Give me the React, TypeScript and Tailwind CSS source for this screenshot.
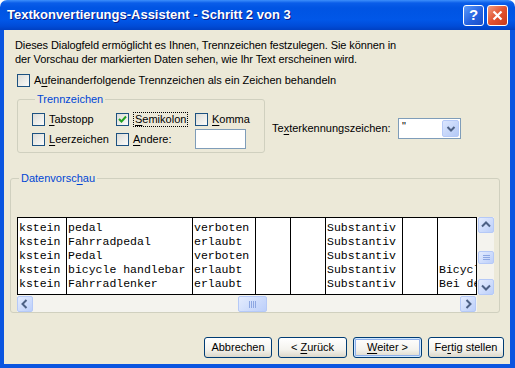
import type { ReactNode } from "react";

const rows = [
    ["kstein", "pedal", "verboten", "", "", "Substantiv", "", ""],
    ["kstein", "Fahrradpedal", "erlaubt", "", "", "Substantiv", "", ""],
    ["kstein", "Pedal", "verboten", "", "", "Substantiv", "", ""],
    ["kstein", "bicycle handlebar", "erlaubt", "", "", "Substantiv", "", "Bicycle handlebar"],
    ["kstein", "Fahrradlenker", "erlaubt", "", "", "Substantiv", "", "Bei der Sache"],
];

const colWidths = ["w-[49px]", "w-[126px]", "w-[63px]", "w-[35px]", "w-[35px]", "w-[77px]", "w-[35px]", "flex-1 border-r"];

function Key({ children }: { children: ReactNode }) {
    return <span className="underline underline-offset-[2px]">{children}</span>;
}

function Check({ checked = false }: { checked?: boolean }) {
    return (
        <span className="flex size-[13px] shrink-0 items-center justify-center border border-[#1c5180] bg-[linear-gradient(135deg,#dcdcd7,#fbfbf9)]">
            {checked && (
                <svg width="9" height="9" viewBox="0 0 9 9">
                    <path d="M1 4l2.5 2.5L8 1.5" fill="none" stroke="#21a121" strokeWidth="2" />
                </svg>
            )}
        </span>
    );
}

function Option({ checked, children, focus }: { checked?: boolean; children: ReactNode; focus?: boolean }) {
    return (
        <div className="flex items-center gap-[4px]">
            <Check checked={checked} />
            <span className={focus ? "border border-dotted border-black px-[1px] leading-[13px]" : "leading-[13px]"}>
                {children}
            </span>
        </div>
    );
}

const arrows = {
    up: "M4 9.5l4-4 4 4",
    down: "M4 6.5l4 4 4-4",
    left: "M9.5 4l-4 4 4 4",
    right: "M6.5 4l4 4-4 4",
};

function ScrollBtn({ dir }: { dir: keyof typeof arrows }) {
    return (
        <div className="flex size-[16px] shrink-0 items-center justify-center rounded-[2px] border border-[#b5c9f7] bg-[linear-gradient(135deg,#e4ecfe,#bccffa)]">
            <svg width="14" height="14" viewBox="1 1 14 14">
                <path d={arrows[dir]} fill="none" stroke="#4d6185" strokeWidth="2" />
            </svg>
        </div>
    );
}

function Button({ children, width, primary }: { children: ReactNode; width: string; primary?: boolean }) {
    return (
        <div
            className={`flex h-[21px] ${width} items-center justify-center rounded-[3px] border border-[#003c74] bg-[linear-gradient(to_bottom,#ffffff,#f4f3ee_60%,#dcd8ca)] ${
                primary ? "shadow-[inset_0_0_0_1px_#cee7ff,inset_0_0_0_2px_#8fb0ea]" : ""
            }`}
        >
            <span className="whitespace-pre">{children}</span>
        </div>
    );
}

export default function App() {
    return (
        <div className="flex h-[368px] w-[515px] flex-col font-['Liberation_Sans',Arial,sans-serif] text-[11px] text-black">
            <div className="flex h-[30px] shrink-0 items-center rounded-t-[7px] bg-[linear-gradient(to_bottom,#3d8ffb_0px,#0a5de9_3px,#0054e3_8px,#0157e8_20px,#004cd8_26px,#0040c2_30px)] pl-[7px] pr-[7px]">
                <span className="flex-1 text-[13px] font-bold text-white [text-shadow:1px_1px_0_#0a1883]">
                    Textkonvertierungs-Assistent - Schritt 2 von 3
                </span>
                <div className="flex gap-[3px]">
                    <div className="flex size-[21px] items-center justify-center rounded-[3px] border border-white bg-[linear-gradient(135deg,#5c9bfb,#2663e0_55%,#1a4fc9)] text-[15px] font-bold text-white">
                        ?
                    </div>
                    <div className="flex size-[21px] items-center justify-center rounded-[3px] border border-white bg-[linear-gradient(135deg,#ef9c80,#e2522f_50%,#c83a1b)]">
                        <svg width="11" height="11" viewBox="0 0 11 11">
                            <path d="M1.5 1.5l8 8M9.5 1.5l-8 8" stroke="white" strokeWidth="2.2" />
                        </svg>
                    </div>
                </div>
            </div>

            <div className="flex flex-1 flex-col border-b-4 border-l-4 border-r-[5px] border-[#0a55e0] bg-[#ece9d8]">
                <p className="ml-[11px] mt-[8px] leading-[14px] tracking-[-0.1px]">
                    Dieses Dialogfeld ermöglicht es Ihnen, Trennzeichen festzulegen. Sie können in
                    <br />
                    der Vorschau der markierten Daten sehen, wie Ihr Text erscheinen wird.
                </p>

                <div className="ml-[13px] mt-[8px] flex h-[13px] items-center gap-[4px]">
                    <Check />
                    <span>
                        A<Key>u</Key>feinanderfolgende Trennzeichen als ein Zeichen behandeln
                    </span>
                </div>

                <div className="ml-[13px] mt-[5px] flex items-start">
                    <fieldset className="w-[248px] rounded-[3px] border border-[#d0d0bf] pb-[3px] pl-[14px]">
                        <legend className="ml-[3px] px-[2px] leading-[14px] text-[#0046d5]">Trennzeichen</legend>
                        <div className="grid grid-cols-[84px_79px_auto] grid-rows-[20px_20px] items-center pt-[3px]">
                            <Option>
                                <Key>T</Key>abstopp
                            </Option>
                            <Option checked focus>
                                <Key>S</Key>emikolon
                            </Option>
                            <Option>
                                <Key>K</Key>omma
                            </Option>
                            <Option>
                                <Key>L</Key>eerzeichen
                            </Option>
                            <Option>
                                <Key>A</Key>ndere:
                            </Option>
                            <div className="h-[20px] w-[51px] border border-[#7f9db9] bg-white" />
                        </div>
                    </fieldset>

                    <div className="ml-[7px] mt-[26px] flex items-center">
                        <span className="w-[126px]">
                            Te<Key>x</Key>terkennungszeichen:
                        </span>
                        <div className="flex h-[21px] w-[63px] items-stretch border border-[#7f9db9] bg-white p-[1px]">
                            <span className="flex-1 pl-[2px] leading-[13px]">"</span>
                            <div className="flex w-[17px] items-center justify-center rounded-[2px] border border-[#b5c9f7] bg-[linear-gradient(135deg,#dbe6fe,#b4c9f6)]">
                                <svg width="10" height="8" viewBox="0 0 10 8">
                                    <path d="M1.5 2l3.5 3.5L8.5 2" fill="none" stroke="#4d6185" strokeWidth="2" />
                                </svg>
                            </div>
                        </div>
                    </div>
                </div>

                <fieldset className="ml-[6px] mt-[18px] w-[490px] rounded-[3px] border border-[#d0d0bf] pl-[6px] pt-[32px]">
                    <legend className="ml-[2px] px-[2px] leading-[14px] text-[#0046d5]">
                        Datenvorsc<Key>h</Key>au
                    </legend>
                    <div className="grid w-[477px] grid-cols-[460px_17px] grid-rows-[78px_17px]">
                        <div className="flex overflow-hidden border-y border-black bg-white pb-[2px] pt-[3px] font-['Liberation_Mono','Courier_New',monospace] text-[11.5px] leading-[14px]">
                            {colWidths.map((w, c) => (
                                <div key={c} className={`${w} -my-[3px] shrink-0 overflow-hidden whitespace-pre border-l border-black pl-[1px] pt-[3px]`}>
                                    {rows.map((r, i) => (
                                        <div key={i} className="h-[14px]">
                                            {r[c]}
                                        </div>
                                    ))}
                                </div>
                            ))}
                        </div>
                        <div className="flex flex-col bg-[#f4f3ee] pl-[1px]">
                            <ScrollBtn dir="up" />
                            <div className="ml-0 mt-[18px] flex h-[13px] w-[16px] items-center justify-center rounded-[2px] border border-[#b5c9f7] bg-[linear-gradient(135deg,#e4ecfe,#bccffa)]">
                                <div className="flex w-[7px] flex-col gap-[1px]">
                                    <span className="h-px bg-[#8da7e2]" />
                                    <span className="h-px bg-[#8da7e2]" />
                                    <span className="h-px bg-[#8da7e2]" />
                                </div>
                            </div>
                            <div className="flex-1" />
                            <ScrollBtn dir="down" />
                        </div>
                        <div className="flex items-center bg-[#f4f3ee] pt-[1px]">
                            <ScrollBtn dir="left" />
                            <div className="ml-[205px] flex h-[16px] w-[29px] items-center justify-center gap-[1px] rounded-[2px] border border-[#b5c9f7] bg-[linear-gradient(135deg,#e4ecfe,#bccffa)]">
                                <span className="h-[7px] w-px bg-[#8da7e2]" />
                                <span className="h-[7px] w-px bg-[#8da7e2]" />
                                <span className="h-[7px] w-px bg-[#8da7e2]" />
                                <span className="h-[7px] w-px bg-[#8da7e2]" />
                            </div>
                            <div className="flex-1" />
                            <ScrollBtn dir="right" />
                            <div className="w-[1px]" />
                        </div>
                        <div />
                    </div>
                </fieldset>

                <div className="mt-[24px] flex justify-end gap-[6px] pr-[6px]">
                    <Button width="w-[68px]">Abbrechen</Button>
                    <Button width="w-[69px]">
                        &lt; <Key>Z</Key>urück
                    </Button>
                    <Button width="w-[69px]" primary>
                        <Key>W</Key>eiter &gt;
                    </Button>
                    <Button width="w-[76px]">
                        Fe<Key>r</Key>tig stellen
                    </Button>
                </div>
            </div>
        </div>
    );
}
